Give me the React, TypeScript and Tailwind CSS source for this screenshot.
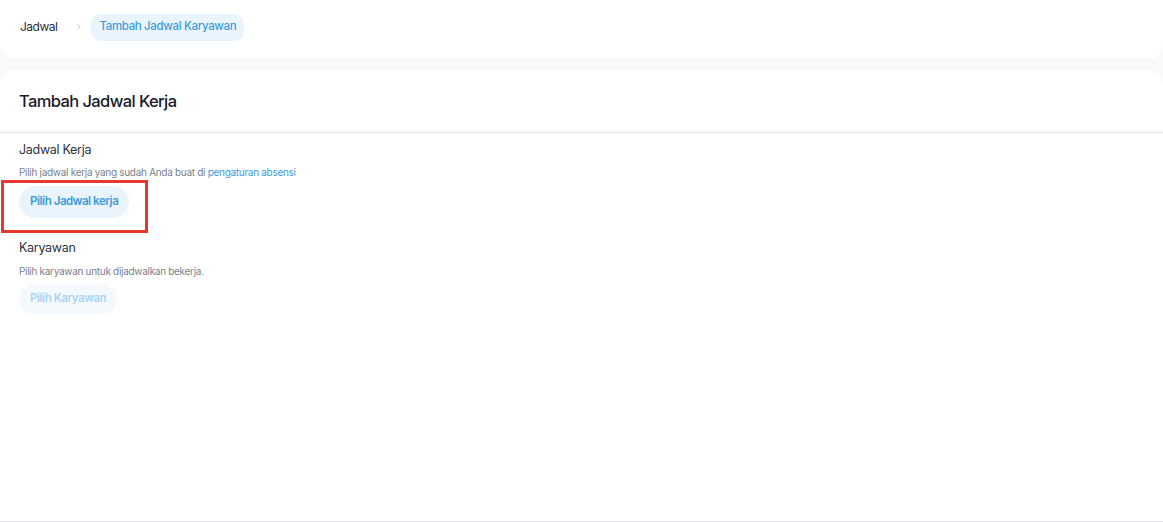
import { ChevronRight } from "lucide-react";
import React from "react";

const font = { fontFamily: "Inter, 'Noto Sans', sans-serif" };

const App = () => {
  return (
    <div className="min-h-[522px] w-full bg-[#f8f9fb] flex flex-col gap-[13px]" style={font}>
      {/* breadcrumb */}
      <div className="h-[58px] bg-white rounded-b-[14px] flex items-center pl-5 pb-[4px]">
        <span className="text-[12px] tracking-[-0.5px] text-[#2b2f3a]">Jadwal</span>
        <ChevronRight className="w-[10px] h-[10px] text-[#b8bcc6] ml-[17px] mr-[7px]" strokeWidth={2} />
        <span className="h-[27px] px-[8px] rounded-[10px] bg-[#eaf4fc] text-[#3d9bd8] text-[11.5px] tracking-[-0.35px] font-medium flex items-center">
          Tambah Jadwal Karyawan
        </span>
      </div>

      {/* form card */}
      <div className="flex-1 bg-white rounded-t-[14px] border-b border-[#e4e2ec] flex flex-col">
        <div className="h-[62px] flex items-center px-[19px] border-b border-[#e4e4ec]">
          <h1 className="text-[16.5px] font-medium text-[#181b2a] tracking-[-0.6px]">Tambah Jadwal Kerja</h1>
        </div>

        <div className="px-[19px] pt-[8px] flex flex-col">
          <div className="text-[12.5px] tracking-[-0.3px] text-[#30333d]">Jadwal Kerja</div>
          <div className="mt-[5px] text-[10px] tracking-[-0.3px] text-[#7a7f8c]">
            Pilih jadwal kerja yang sudah Anda buat di{" "}
            <span className="text-[#3d9bd8]">pengaturan absensi</span>
          </div>
          <div className="relative mt-[6px] w-fit">
            <button className="h-[32px] px-[11px] rounded-full bg-[#eaf4fc] text-[#3d9bd8] text-[11.5px] tracking-[-0.45px] font-semibold">
              Pilih Jadwal kerja
            </button>
            <div className="absolute left-[-18px] top-[-6px] w-[147px] h-[53px] border-[3px] border-[#e5392e] pointer-events-none" />
          </div>

          <div className="mt-[21px] text-[12.5px] tracking-[-0.3px] text-[#30333d]">Karyawan</div>
          <div className="mt-[6px] text-[10px] tracking-[-0.3px] text-[#7a7f8c]">Pilih karyawan untuk dijadwalkan bekerja.</div>
          <button className="mt-[5px] w-fit h-[30px] px-[11px] rounded-full bg-[#f4f9fd] text-[#a9d4f1] text-[11.5px] tracking-[-0.45px] font-semibold">
            Pilih Karyawan
          </button>
        </div>
      </div>
    </div>
  );
};

export default App;
